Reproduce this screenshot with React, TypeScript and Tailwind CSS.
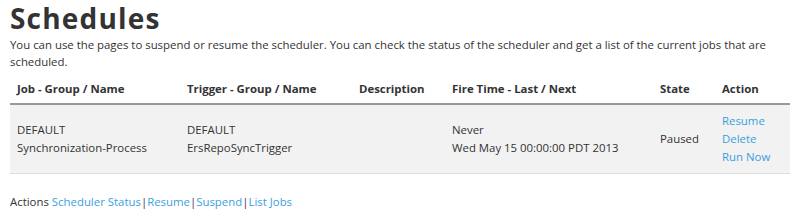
export default function App() {
  const link = 'text-[#3a9fe0] hover:underline'
  const th = 'font-bold pt-[6px] pb-[6px] pl-[7px]'
  const td = 'pl-[7px] py-[7px]'
  return (
    <div className="w-[800px] h-[216px] bg-white px-[10px] pt-[1px] text-[11.4px] text-[#333] font-['Open_Sans',sans-serif]">
      <h1 className="text-[28px] font-bold leading-[34px] tracking-[1.2px] text-[#333]">Schedules</h1>
      <p className="leading-[17px] mt-[1px]">
        You can use the pages to suspend or resume the scheduler. You can check the status of the scheduler and get a list of the current jobs that are scheduled.
      </p>
      <table className="w-[780px] mt-[4px] border-collapse text-left">
        <thead>
          <tr className="border-b-2 border-[#999]">
            <th className={`${th} w-[170px]`}>Job - Group / Name</th>
            <th className={`${th} w-[172px]`}>Trigger - Group / Name</th>
            <th className={`${th} w-[93px]`}>Description</th>
            <th className={`${th} w-[208px]`}>Fire Time - Last / Next</th>
            <th className={`${th} w-[62px]`}>State</th>
            <th className={th}>Action</th>
          </tr>
        </thead>
        <tbody>
          <tr className="bg-[#f2f2f2] border-b border-[#ddd] leading-[18px]">
            <td className={td}>DEFAULT<br />Synchronization-Process</td>
            <td className={td}>DEFAULT<br />ErsRepoSyncTrigger</td>
            <td className={td}></td>
            <td className={td}>Never<br />Wed May 15 00:00:00 PDT 2013</td>
            <td className={td}>Paused</td>
            <td className={td}>
              <div className="flex flex-col">
                <a href="#" className={link}>Resume</a>
                <a href="#" className={link}>Delete</a>
                <a href="#" className={link}>Run Now</a>
              </div>
            </td>
          </tr>
        </tbody>
      </table>
      <div className="mt-[19px]">
        Actions <a href="#" className={link}>Scheduler Status</a>
        <span className="text-[#5c2d5c]">|</span>
        <a href="#" className={link}>Resume</a>
        <span className="text-[#5c2d5c]">|</span>
        <a href="#" className={link}>Suspend</a>
        <span className="text-[#5c2d5c]">|</span>
        <a href="#" className={link}>List Jobs</a>
      </div>
    </div>
  )
}
